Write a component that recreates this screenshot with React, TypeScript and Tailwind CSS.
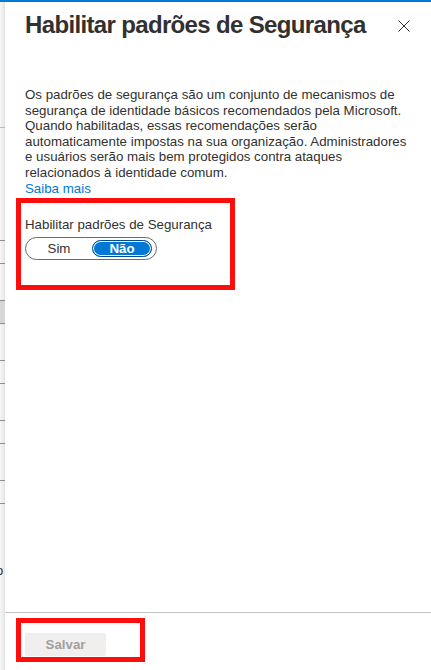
import React from 'react';

const bodyFont = { fontFamily: '"Liberation Sans", Arial, sans-serif' };

// faixa da página por trás do painel (linhas da tabela que aparecem na borda)
const PageEdge = () => {
    return (
        <div className='w-[5px] shrink-0 flex flex-col overflow-hidden bg-gradient-to-r from-[#f7f7f7] to-[#e4e4e4]'>
            <div className='h-[125px] shrink-0' />
            <div className='h-px shrink-0 bg-[#b9b9b9]' />
            <div className='h-[112px] shrink-0' />
            <div className='h-px shrink-0 bg-[#8f8f8f]' />
            <div className='h-[22px] shrink-0' />
            <div className='h-px shrink-0 bg-[#8f8f8f]' />
            <div className='h-[36px] shrink-0' />
            <div className='h-px shrink-0 bg-[#8f8f8f]' />
            <div className='h-[22px] shrink-0 bg-[#d6d6d6]' />
            <div className='h-px shrink-0 bg-[#8f8f8f]' />
            <div className='h-[36px] shrink-0' />
            <div className='h-px shrink-0 bg-[#8f8f8f]' />
            <div className='h-[22px] shrink-0' />
            <div className='h-px shrink-0 bg-[#8f8f8f]' />
            <div className='h-[36px] shrink-0' />
            <div className='h-px shrink-0 bg-[#8f8f8f]' />
            <div className='h-[22px] shrink-0' />
            <div className='h-px shrink-0 bg-[#8f8f8f]' />
            <div className='h-[36px] shrink-0' />
            <div className='h-px shrink-0 bg-[#8f8f8f]' />
            <div className='h-[22px] shrink-0' />
            <div className='h-px shrink-0 bg-[#8f8f8f]' />
            <div className='h-[60px] shrink-0' />
            <div className='-ml-[4px] text-[13px] leading-[14px] text-[#323130]' style={bodyFont}>o</div>
        </div>
    );
};

export default function App() {
    return (
        <div className='w-[431px] h-[670px] flex flex-col bg-white overflow-hidden' style={bodyFont}>
            <div className='h-[2px] shrink-0 bg-[#0078d4]' />
            <div className='flex flex-1 min-h-0'>
                <PageEdge />
                <div className='flex-1 flex flex-col bg-white'>
                    {/* cabeçalho */}
                    <div className='flex items-start justify-between pl-[20px] pr-[20px] pt-[8px]'>
                        <h1 className='text-[24px] leading-[30px] font-bold tracking-[-0.65px] text-[#323130]'>
                            Habilitar padrões de Segurança
                        </h1>
                        <button className='mt-[9px] w-[14px] h-[14px] flex items-center justify-center text-[#323130]'>
                            <svg width='12' height='12' viewBox='0 0 12 12' fill='none'>
                                <path d='M0.5 0.5L11.5 11.5M11.5 0.5L0.5 11.5' stroke='currentColor' strokeWidth='1' />
                            </svg>
                        </button>
                    </div>

                    <div className='px-[20px] mt-[47px] text-[13.3px] leading-[15.6px] text-[#323130]'>
                        <p>
                            Os padrões de segurança são um conjunto de mecanismos de segurança de identidade básicos recomendados pela Microsoft. Quando habilitadas, essas recomendações serão automaticamente impostas na sua organização. Administradores e usuários serão mais bem protegidos contra ataques relacionados à identidade comum.
                        </p>
                        <a href='#' className='text-[#0078d4]'>Saiba mais</a>
                    </div>

                    {/* opção destacada */}
                    <div className='ml-[11px] mt-[2px] w-[219px] h-[92px] border-[5px] border-[#fe0d0d] pl-[4px] pt-[14px]'>
                        <div className='text-[13.3px] leading-[16px] text-[#323130]'>Habilitar padrões de Segurança</div>
                        <div className='mt-[4px] w-[132px] h-[23px] rounded-full border border-[#6b6a69] flex items-center pr-[3px]'>
                            <span className='w-[66px] text-center text-[13.3px] text-[#323130]'>Sim</span>
                            <span className='w-[60px] h-[17px] rounded-full bg-[#0078d4] border border-[#004e8c] shadow-[inset_0_0_0_1px_#ffffff] flex items-center justify-center text-[13.3px] font-bold text-white leading-none'>
                                Não
                            </span>
                        </div>
                    </div>

                    <div className='flex-1' />

                    {/* rodapé */}
                    <div className='h-px bg-[#c4c4c4]' />
                    <div className='ml-[11px] mt-[5px] mb-[8px] w-[129px] h-[44px] border-[5px] border-[#fe0d0d] pl-[4px] pt-[9px]'>
                        <button disabled className='w-[81px] h-[23px] rounded-[2px] bg-[#f0efee] text-[13.3px] font-bold text-[#a19f9d]'>
                            Salvar
                        </button>
                    </div>
                </div>
            </div>
        </div>
    );
}
